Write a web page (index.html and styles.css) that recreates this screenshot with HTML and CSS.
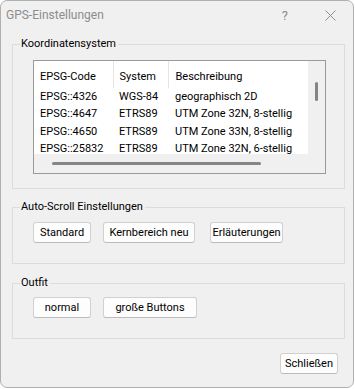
FILE: index.html
```html
<!DOCTYPE html>
<html lang="de">
<head>
  <meta charset="UTF-8" />
  <meta name="viewport" content="width=device-width, initial-scale=1.0"/>
  <title>GPS-Einstellungen</title>
  <link rel="stylesheet" href="styles.css">
</head>
<body>

<div class="dialog">
  <div class="titlebar">
    <span class="title">GPS-Einstellungen</span>
    <span class="help">?</span>
    <svg class="close" width="11" height="11" viewBox="0 0 11 11">
      <path d="M0.5 0.5 L10.5 10.5 M10.5 0.5 L0.5 10.5" stroke="#8f8f8f" stroke-width="1" fill="none"/>
    </svg>
  </div>

  <div class="content">
    <!-- Koordinatensystem -->
    <fieldset class="group group-coords">
      <legend>Koordinatensystem</legend>
      <div class="listview">
        <div class="list-body">
          <table class="list">
            <colgroup>
              <col class="col-code">
              <col class="col-sys">
              <col class="col-desc">
            </colgroup>
            <thead>
              <tr><th>EPSG-Code</th><th>System</th><th class="last">Beschreibung</th></tr>
            </thead>
            <tbody>
              <tr><td>EPSG::4326</td><td>WGS-84</td><td>geographisch 2D</td></tr>
              <tr><td>EPSG::4647</td><td>ETRS89</td><td>UTM Zone 32N, 8-stellig</td></tr>
              <tr><td>EPSG::4650</td><td>ETRS89</td><td>UTM Zone 33N, 8-stellig</td></tr>
              <tr><td>EPSG::25832</td><td>ETRS89</td><td>UTM Zone 32N, 6-stellig</td></tr>
            </tbody>
          </table>
        </div>
        <div class="vscroll"><span class="thumb"></span></div>
        <div class="hscroll"><span class="thumb"></span></div>
        <div class="corner"></div>
      </div>
    </fieldset>

    <!-- Auto-Scroll -->
    <fieldset class="group group-scroll">
      <legend>Auto-Scroll Einstellungen</legend>
      <div class="button-row">
        <button type="button" class="btn btn-standard">Standard</button>
        <button type="button" class="btn btn-kern">Kernbereich neu</button>
        <button type="button" class="btn btn-info">Erläuterungen</button>
      </div>
    </fieldset>

    <!-- Outfit -->
    <fieldset class="group group-outfit">
      <legend>Outfit</legend>
      <div class="button-row">
        <button type="button" class="btn btn-normal">normal</button>
        <button type="button" class="btn btn-big">große Buttons</button>
      </div>
    </fieldset>

    <div class="footer">
      <button type="button" class="btn btn-close">Schließen</button>
    </div>
  </div>
</div>

</body>
</html>
```

FILE: styles.css
```css
* {
  box-sizing: border-box;
}

body {
  margin: 0;
  background: #ffffff;
  font-family: Roboto, "Noto Sans", sans-serif;
  font-size: 11px;
  color: #000;
}

.dialog {
  width: 354px;
  height: 388px;
  background: #f0f0f0;
  border: 1px solid #b0b0b0;
  border-radius: 7px;
  overflow: hidden;
}

.titlebar {
  display: flex;
  align-items: center;
  height: 28px;
  padding-left: 5px;
  color: #8c8c8c;
}

.title {
  flex: 1;
  font-size: 12px;
}

.help {
  font-size: 13px;
  margin-right: 37px;
}

.close {
  margin-right: 17px;
}

.content {
  padding: 7px 8px 0 11px;
}

.group {
  margin: 0;
  border: 1px solid #dcdcdc;
  padding: 8px 0 14px 20px;
  min-width: 0;
}

.group legend {
  margin-left: -13px;
  padding: 0 2px 0 1px;
  line-height: 16px;
}

.group-scroll {
  margin-top: 10px;
  padding: 7px 0 20px 20px;
}

.group-outfit {
  margin-top: 11px;
  padding: 6px 0 20px 20px;
}

/* list view */
.listview {
  width: 293px;
  height: 114px;
  border: 1px solid #9a9a9a;
  display: grid;
  grid-template-columns: 274px 17px;
  grid-template-rows: 93px 19px;
  background: #fff;
}

.list-body {
  overflow: hidden;
  background: #fff;
}

.list {
  table-layout: fixed;
  width: 294px;
  border-collapse: collapse;
  white-space: nowrap;
}

.col-code {
  width: 79px;
}

.col-sys {
  width: 55px;
}

.col-desc {
  width: 160px;
}

.list th {
  font-weight: normal;
  text-align: left;
  padding: 7px 0 3px 6px;
  line-height: 17px;
  border-right: 1px solid #e5e5e5;
  overflow: hidden;
}

.list th.last {
  border-right: none;
  padding-left: 7px;
}

.list td {
  padding: 0 0 0 6px;
  line-height: 17.4px;
  overflow: hidden;
}

.list td:last-child {
  padding-left: 7px;
}

.vscroll {
  background: #f0f0f0;
  display: flex;
  justify-content: center;
  padding-top: 21px;
}

.vscroll .thumb {
  width: 3px;
  height: 19px;
  border-radius: 2px;
  background: #858585;
}

.hscroll {
  background: #f0f0f0;
  padding: 8px 0 0 18px;
}

.hscroll .thumb {
  display: block;
  width: 209px;
  height: 3px;
  border-radius: 2px;
  background: #858585;
}

.corner {
  background: #f0f0f0;
}

/* buttons */
.button-row {
  display: flex;
  height: 21px;
}

.btn {
  font-family: inherit;
  font-size: 11px;
  color: #000;
  height: 21px;
  padding: 0;
  white-space: nowrap;
  background: #fdfdfd;
  border: 1px solid #d0d0d0;
  border-bottom-color: #bcbcbc;
  border-radius: 3px;
}

.btn-standard,
.btn-normal {
  width: 58px;
}

.btn-kern {
  width: 92px;
  margin-left: 12px;
}

.btn-info {
  width: 73px;
  margin-left: 15px;
}

.btn-big {
  width: 94px;
  margin-left: 12px;
}

.footer {
  display: flex;
  justify-content: flex-end;
  margin-top: 14px;
  padding-right: 7px;
}

.btn-close {
  width: 58px;
}
```
